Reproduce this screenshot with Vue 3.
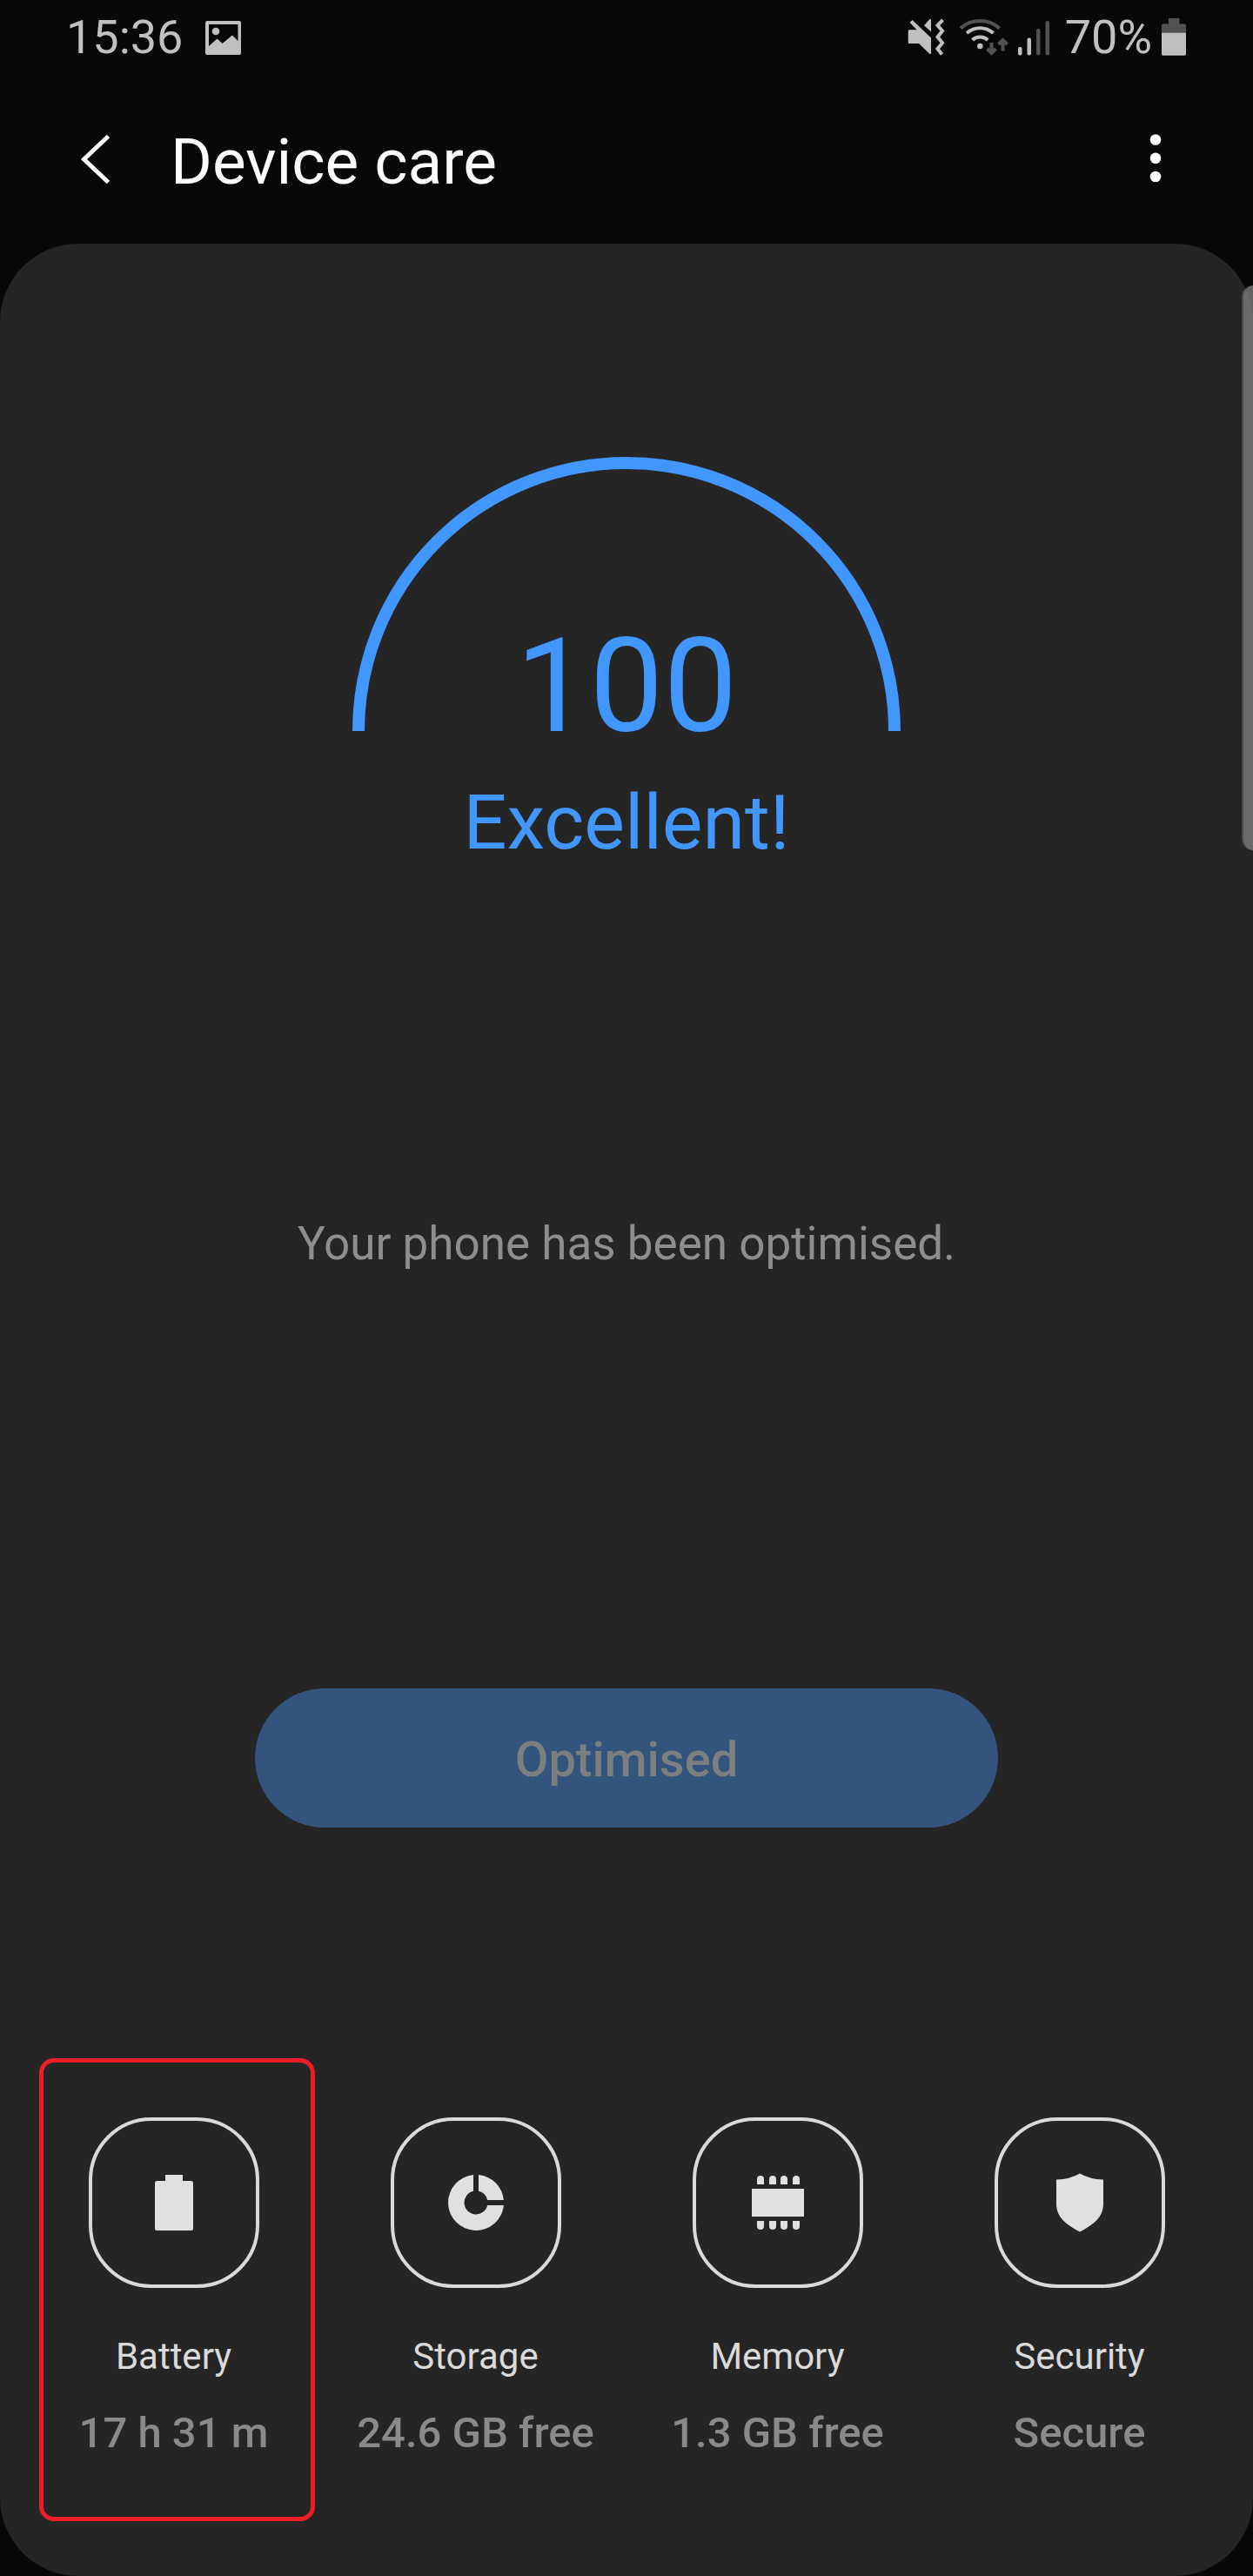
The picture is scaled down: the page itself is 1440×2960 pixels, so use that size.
<script setup>
const tiles = [
  { id: 'battery', label: 'Battery', value: '17 h 31 m', highlighted: true },
  { id: 'storage', label: 'Storage', value: '24.6 GB free' },
  { id: 'memory', label: 'Memory', value: '1.3 GB free' },
  { id: 'security', label: 'Security', value: 'Secure' },
]
const pins = [16, 30, 43, 57]
</script>

<template>
  <div class="screen">
    <div class="status">
      <span class="status-text">15:36</span>
      <svg class="picture" width="44" height="44" viewBox="0 0 44 44" aria-hidden="true">
        <path
          fill="#c0c0c0"
          fill-rule="evenodd"
          d="M4 3H41Q43 3 43 5V40Q43 42 41 42H4Q2 42 2 40V5Q2 3 4 3ZM6 7V32L15.500 23.500L21.500 29L33 19.500L39.500 26V7Z"
        />
        <circle cx="14" cy="15" r="4.300" fill="#c0c0c0" />
      </svg>
      <div class="status-icons">
        <svg width="50" height="44" viewBox="0 0 50 44" aria-hidden="true">
          <g fill="#c0c0c0">
            <path d="M3 13.300H11.500L3.500 4.800L6.500 2L28 22.500V41H26.500L14 29H3Q1.700 29 1.700 27.500V14.800Q1.700 13.300 3 13.300Z" />
            <path d="M20 8.300L26.500 1H28V15.500Z" />
          </g>
          <path
            d="M41.500 1.800L35.500 8L41 14.500L35.500 21.500L41 28.300L35.500 35L40.500 41.500"
            fill="none"
            stroke="#c0c0c0"
            stroke-width="4"
          />
        </svg>
        <svg width="58" height="44" viewBox="0 0 58 44" aria-hidden="true">
          <g fill="none" stroke-width="4">
            <path d="M2 11.500Q11 3 24.300 3T46.600 11.500" stroke="#525252" />
            <path d="M9 17Q16 11.300 24.300 11.300T39.600 17" stroke="#c0c0c0" />
            <path d="M15.500 25Q19 21.500 24.300 21.500T33.200 25" stroke="#c0c0c0" />
            <path d="M37.500 28V39M32.500 35L37.500 40L42.500 35M50.500 37.500V26M45.500 30L50.500 25L55.500 30" stroke="#525252" />
          </g>
          <circle cx="24.300" cy="32" r="3.300" fill="#c0c0c0" />
        </svg>
        <svg width="44" height="44" viewBox="0 0 44 44" aria-hidden="true">
          <g fill="#c0c0c0">
            <rect x="0" y="33" width="4.500" height="9.500" rx="2" />
            <rect x="10.500" y="22.500" width="4.500" height="20" rx="2" />
          </g>
          <g fill="#525252">
            <rect x="21" y="12" width="4.500" height="30.500" rx="2" />
            <rect x="31.500" y="3" width="4.500" height="39.500" rx="2" />
          </g>
        </svg>
        <span class="status-text">70%</span>
        <svg width="30" height="44" viewBox="0 0 30 44" aria-hidden="true">
          <path d="M1 17V8Q1 6.500 2.500 6.500H9V0H21.500V6.500H27.500Q29 6.500 29 8V17Z" fill="#525252" />
          <path d="M1 16.700H29V41Q29 42.700 27.500 42.700H2.500Q1 42.700 1 41Z" fill="#c0c0c0" />
        </svg>
      </div>
    </div>

    <header class="app-bar">
      <button class="icon-button" type="button" aria-label="Back">
        <svg width="60" height="60" viewBox="0 0 60 60" aria-hidden="true">
          <path d="M44.500 3.500L16.500 30L44.500 56.500" fill="none" stroke="#fcfcfc" stroke-width="5" />
        </svg>
      </button>
      <h1 class="title">Device care</h1>
      <button class="icon-button" type="button" aria-label="More options">
        <svg width="60" height="60" viewBox="0 0 60 60" aria-hidden="true">
          <g fill="#fff">
            <circle cx="30" cy="7.500" r="6.300" />
            <circle cx="30" cy="28.700" r="6.300" />
            <circle cx="30" cy="50" r="6.300" />
          </g>
        </svg>
      </button>
    </header>

    <main class="panel">
      <div class="gauge">
        <svg class="arc" width="630" height="315" viewBox="0 0 630 315" aria-hidden="true">
          <path d="M7 315A308 308 0 0 1 623 315" fill="none" stroke="#4297ff" stroke-width="14" />
        </svg>
        <span class="score">100</span>
      </div>
      <p class="rating">Excellent!</p>
      <p class="message">Your phone has been optimised.</p>
      <button class="optimise" type="button" disabled>Optimised</button>

      <nav class="tiles">
        <button
          v-for="tile in tiles"
          :key="tile.id"
          type="button"
          class="tile"
          :class="{ highlighted: tile.highlighted }"
        >
          <span class="tile-icon">
            <svg width="72" height="72" viewBox="0 0 72 72" fill="#e0e0e0" aria-hidden="true">
              <path
                v-if="tile.id === 'battery'"
                d="M26 4H46V11H55.500Q58 11 58 13.500V65.500Q58 68 55.500 68H16.500Q14 68 14 65.500V13.500Q14 11 16.500 11H26Z"
              />
              <template v-else-if="tile.id === 'storage'">
                <path d="M33 4.100A32 32 0 1 0 67.900 39H49.200A13.500 13.500 0 1 1 33 22.800Z" />
                <path d="M39 4.100A32 32 0 0 1 67.900 33H49.200A13.500 13.500 0 0 0 39 22.800Z" />
              </template>
              <template v-else-if="tile.id === 'memory'">
                <rect x="6" y="20" width="60" height="32" />
                <template v-for="x in pins" :key="x">
                  <path :d="`M${x - 4} 15V9a4 4 0 0 1 8 0V15Z`" />
                  <path :d="`M${x - 4} 57V63a4 4 0 0 0 8 0V57Z`" />
                </template>
              </template>
              <path v-else d="M36 2.500Q47 9 63 9.500V37C63 53 52 61 36 69.500C20 61 9 53 9 37V9.500Q25 9 36 2.500Z" />
            </svg>
          </span>
          <span class="tile-label">{{ tile.label }}</span>
          <span class="tile-value">{{ tile.value }}</span>
        </button>
      </nav>
    </main>

    <div class="edge-handle"></div>
  </div>
</template>

<style>
body {
  margin: 0;
  background: #080808;
}
</style>

<style scoped>
.screen {
  position: relative;
  display: flex;
  flex-direction: column;
  min-height: 100vh;
  overflow: hidden;
  background: #080808;
  font-family: Roboto, "Liberation Sans", sans-serif;
}

button {
  margin: 0;
  padding: 0;
  border: 0;
  background: none;
  font-family: inherit;
}

svg {
  display: block;
  flex: none;
}

.status {
  display: flex;
  align-items: center;
  height: 86px;
  padding: 0 76px;
}

.status-text {
  color: #c0c0c0;
  font-size: 54px;
  line-height: 64px;
}

.picture {
  margin-left: 24px;
}

.status-icons {
  display: flex;
  align-items: center;
  gap: 10px;
  margin-left: auto;
}

.app-bar {
  display: flex;
  align-items: center;
  height: 194px;
  padding: 0 82px 0 80px;
}

.icon-button {
  width: 60px;
  height: 60px;
}

.title {
  flex: 1;
  margin: 0;
  padding: 6px 0 0 56px;
  color: #fcfcfc;
  font-size: 73px;
  font-weight: 400;
  line-height: 88px;
}

.panel {
  display: flex;
  flex: 1;
  flex-direction: column;
  align-items: center;
  padding: 245px 26px 63px;
  border-radius: 90px;
  background: #252525;
}

.gauge {
  display: grid;
  justify-items: center;
}

.arc,
.score {
  grid-area: 1 / 1;
}

.score {
  align-self: end;
  color: #4297ff;
  font-size: 151px;
  line-height: 102px;
}

.rating {
  margin: 53px 0 0;
  color: #4297ff;
  font-size: 88px;
  line-height: 104px;
}

.message {
  margin: 400px 0 0;
  color: #8e8e8e;
  font-size: 53px;
  line-height: 64px;
}

.optimise {
  width: 854px;
  max-width: 100%;
  height: 160px;
  margin-top: 479px;
  padding-top: 4px;
  border-radius: 80px;
  background: #33547d;
  color: #7b7f80;
  font-size: 56px;
  font-weight: 500;
  line-height: 64px;
}

.tiles {
  display: grid;
  grid-template-columns: repeat(4, 1fr);
  width: 100%;
  margin-top: 265px;
}

.tile {
  position: relative;
  display: flex;
  flex-direction: column;
  align-items: center;
  padding: 68px 0 71px;
}

.highlighted::after {
  content: "";
  position: absolute;
  inset: 0 11px 0 19px;
  border: 5px solid #eb1f25;
  border-radius: 17px;
}

.tile-icon {
  display: flex;
  align-items: center;
  justify-content: center;
  box-sizing: border-box;
  width: 196px;
  height: 196px;
  border: 4px solid #dadada;
  border-radius: 72px;
}

.tile-label {
  margin-top: 51px;
  color: #dadada;
  font-size: 42px;
  line-height: 56px;
}

.tile-value {
  margin-top: 30px;
  color: #8a8a8a;
  font-size: 49px;
  font-weight: 500;
  line-height: 60px;
  white-space: nowrap;
}

.edge-handle {
  position: absolute;
  top: 328px;
  right: 0;
  box-sizing: border-box;
  width: 13px;
  height: 649px;
  border-left: 2px solid rgba(112, 112, 112, 0.5);
  border-radius: 13px 0 0 13px;
  background: rgba(125, 125, 125, 0.78);
  background-clip: padding-box;
}
</style>
